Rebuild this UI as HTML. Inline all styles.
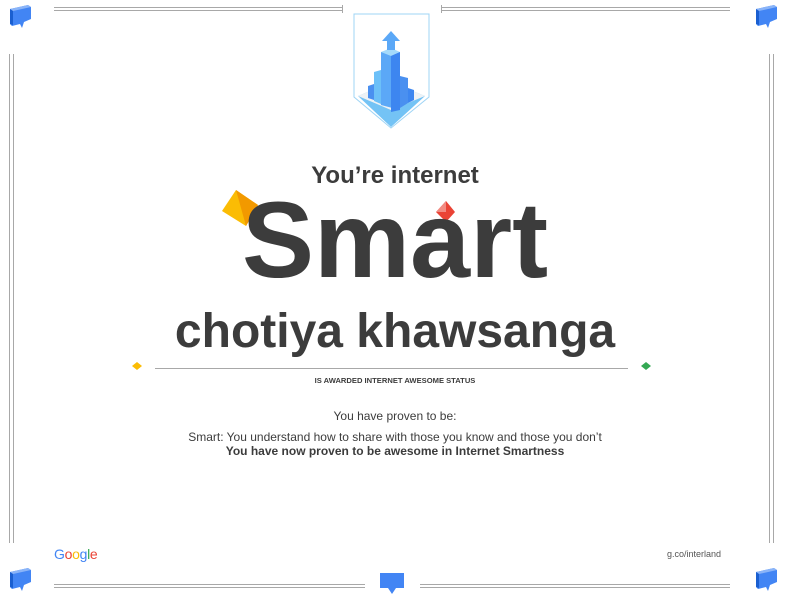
<!DOCTYPE html>
<html><head><meta charset="utf-8"><style>
html,body{margin:0;padding:0;background:#fff;}
body{width:790px;height:602px;position:relative;overflow:hidden;font-family:"Liberation Sans",sans-serif;color:#3c3c3c;}
.t{position:absolute;left:0;width:790px;text-align:center;white-space:nowrap;}
</style></head><body>
<svg width="790" height="602" style="position:absolute;left:0;top:0">
<g stroke="#a8a8a8" stroke-width="1" fill="none">
<line x1="54" y1="7.5" x2="342" y2="7.5"/><line x1="54" y1="10.5" x2="342" y2="10.5"/><line x1="342.5" y1="5" x2="342.5" y2="13"/>
<line x1="441" y1="7.5" x2="730" y2="7.5"/><line x1="441" y1="10.5" x2="730" y2="10.5"/><line x1="441.5" y1="5" x2="441.5" y2="13"/>
<line x1="9.5" y1="54" x2="9.5" y2="543"/><line x1="13.5" y1="54" x2="13.5" y2="543"/>
<line x1="769.5" y1="54" x2="769.5" y2="543"/><line x1="773.5" y1="54" x2="773.5" y2="543"/>
<line x1="54" y1="584.5" x2="365" y2="584.5"/><line x1="54" y1="587.5" x2="365" y2="587.5"/>
<line x1="420" y1="584.5" x2="730" y2="584.5"/><line x1="420" y1="587.5" x2="730" y2="587.5"/>
<line x1="155" y1="368.5" x2="628" y2="368.5"/>
</g>
<g id="b"><path d="M10 9 L28 5 L31 7 L31 19 L24 22 L22 28 L20 24 L12 26 L10 24Z" fill="#4285f4"/><path d="M10 9 L28 5 L31 7 L13 11Z" fill="#8ab4f8"/><path d="M10 9 L13 11 L13 25 L10 24Z" fill="#1a5fd0"/></g>
<use href="#b" x="746" y="0"/><use href="#b" x="0" y="563"/><use href="#b" x="746" y="563"/>
<path d="M380 573 L404 573 L404 588 L396 588 L392 594 L388 588 L380 588Z" fill="#4285f4"/>
<path d="M354 14 L429 14 L429 97 L391 128 L354 97Z" fill="none" stroke="#9fd4f5" stroke-width="1"/>
<path d="M358 96 L391 82 L425 96 L391 127Z" fill="#74c3f5"/>
<path d="M358 96 L391 82 L425 96 L391 110Z" fill="#eef2f5"/>
<path d="M381 52 L400 52 L400 110 L381 105Z" fill="#5ba8f7"/><path d="M381 52 L391 48 L400 52 L391 56Z" fill="#a4dafb"/>
<path d="M391 56 L400 52 L400 110 L391 112Z" fill="#3d86f0"/>
<path d="M374 72 L381 70 L381 104 L374 101Z" fill="#6cc0f8"/>
<path d="M368 86 L374 84 L374 100 L368 98Z" fill="#4a90f0"/>
<path d="M400 76 L408 78 L408 103 L400 108Z" fill="#4a90f0"/>
<path d="M408 88 L414 90 L414 100 L408 103Z" fill="#3d86f0"/>
<path d="M391 31 L400 41 L395 41 L395 50 L387 50 L387 41 L382 41Z" fill="#5ba8f7"/>
<path d="M222 211 L236 190 L258 205 L246 226Z" fill="#fbbc04"/><path d="M236 190 L258 205 L246 226Z" fill="#f29900"/>
<path d="M436 212 L446 201 L455 212 L446 222Z" fill="#ea4335"/><path d="M436 212 L446 201 L446 212Z" fill="#f28b82"/>
<path d="M132 366 L137 362 L142 366 L137 370Z" fill="#fbbc04"/>
<path d="M641 366 L646 362 L651 366 L646 370Z" fill="#34a853"/>
</svg>
<div class="t" style="top:162px;font-size:24px;line-height:28px;font-weight:bold;">You’re internet</div>
<div class="t" style="top:186px;font-size:108px;font-weight:bold;line-height:108px;">Smart</div>
<div class="t" style="top:304px;font-size:48px;font-weight:bold;line-height:56px;">chotiya khawsanga</div>
<div class="t" style="top:376px;font-size:7.6px;font-weight:bold;">IS AWARDED INTERNET AWESOME STATUS</div>
<div class="t" style="top:409px;font-size:12px;">You have proven to be:</div>
<div class="t" style="top:430px;font-size:12px;">Smart: You understand how to share with those you know and those you don’t</div>
<div class="t" style="top:444px;font-size:12px;font-weight:bold;">You have now proven to be awesome in Internet Smartness</div>
<div style="position:absolute;left:54px;top:546px;font-size:14px;letter-spacing:-0.3px;"><span style="color:#4285f4">G</span><span style="color:#ea4335">o</span><span style="color:#fbbc04">o</span><span style="color:#4285f4">g</span><span style="color:#34a853">l</span><span style="color:#ea4335">e</span></div>
<div style="position:absolute;left:667px;top:549px;font-size:9px;color:#555;">g.co/interland</div>
</body></html>
